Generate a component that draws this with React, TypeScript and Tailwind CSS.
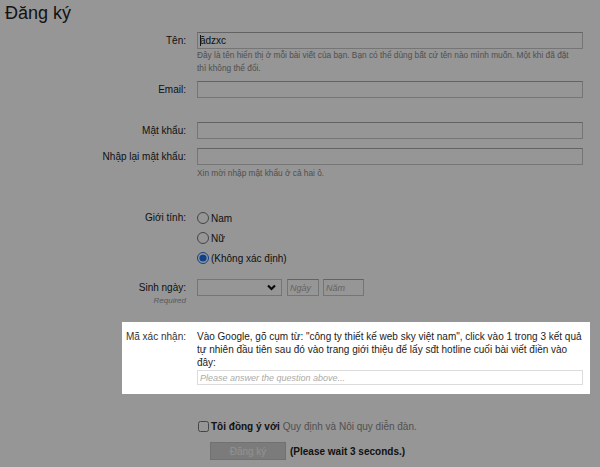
import React from 'react';
import clsx from 'clsx';

const font = "font-['Liberation_Sans',Arial,sans-serif]";

function Row({
  label,
  sub,
  className,
  labelLeading = 'leading-[17px]',
  children,
}: {
  label: string;
  sub?: string;
  className?: string;
  labelLeading?: string;
  children: React.ReactNode;
}) {
  return (
    <div className={clsx('grid grid-cols-[186px_386px] gap-x-[11px]', className)}>
      <div className="text-right">
        <div className={clsx('text-[10px] text-[#222]', labelLeading)}>{label}</div>
        {sub && <div className="text-[8px] italic leading-[9px] text-[#999]">{sub}</div>}
      </div>
      <div>{children}</div>
    </div>
  );
}

function TextBox({ value, placeholder, className }: { value?: string; placeholder?: string; className?: string }) {
  return (
    <input
      type="text"
      defaultValue={value}
      placeholder={placeholder}
      className={clsx(
        'block h-[17px] border border-[#c8c8c8] border-t-[#a8a8a8] bg-white px-[2px] text-[10px] text-[#222] outline-none placeholder:italic placeholder:text-[9px] placeholder:text-[#aaa]',
        className
      )}
    />
  );
}

function Radio({ label, checked }: { label: string; checked?: boolean }) {
  return (
    <label className="flex h-[20px] items-center gap-[2px] text-[10px] text-[#222]">
      <input type="radio" name="gender" defaultChecked={checked} className="m-0 h-[12px] w-[12px] accent-[#1a6ee8]" />
      {label}
    </label>
  );
}

export default function App() {
  return (
    <div className={clsx('relative h-[467px] w-[600px] overflow-hidden bg-white', font)}>
      <h1 className="pl-[5px] text-[18px] leading-[26px] text-[#222]">Đăng ký</h1>

      <Row label="Tên:" className="mt-[6px]">
        <div className="relative">
          <TextBox value="ădzxc" className="w-full" />
          <span className="absolute left-[3px] top-[3px] h-[11px] w-px bg-[#222]" />
        </div>
        <p className="text-[8.3px] leading-[13px] text-[#888]">
          Đây là tên hiển thị ở mỗi bài viết của bạn. Bạn có thể dùng bất cứ tên nào mình muốn. Một khi đã đặt
          <br />
          thì không thể đổi.
        </p>
      </Row>

      <Row label="Email:" className="mt-[6px]">
        <TextBox className="w-full" />
      </Row>

      <Row label="Mật khẩu:" className="mt-[24px]">
        <TextBox className="w-full" />
      </Row>

      <Row label="Nhập lại mật khẩu:" className="mt-[9px]">
        <TextBox className="w-full" />
        <p className="mt-[2px] text-[8.3px] leading-[13px] text-[#888]">Xin mời nhập mật khẩu ở cả hai ô.</p>
      </Row>

      <Row label="Giới tính:" className="mt-[28px]" labelLeading="leading-[20px]">
        <Radio label="Nam" />
        <Radio label="Nữ" />
        <Radio label="(Không xác định)" checked />
      </Row>

      <Row label="Sinh ngày:" sub="Required" className="mt-[11px]">
        <div className="flex gap-[5px]">
          <div className="relative h-[17px] w-[85px] border border-[#c8c8c8] bg-white">
            <svg
              className="absolute right-[5px] top-[4px]"
              width="9"
              height="7"
              viewBox="0 0 9 7"
              fill="none"
              stroke="#111"
              strokeWidth="2.2"
            >
              <path d="M1 1.5 4.5 5 8 1.5" />
            </svg>
          </div>
          <TextBox placeholder="Ngày" className="w-[32px]" />
          <TextBox placeholder="Năm" className="-ml-px w-[41px]" />
        </div>
      </Row>

      <div className="relative z-20 mt-[17px] ml-[122px] w-[468px] bg-white pt-[8px] pb-[9px]">
        <div className="grid grid-cols-[64px_386px] gap-x-[11px]">
          <div className="text-right text-[10px] leading-[13px] text-[#333]">Mã xác nhận:</div>
          <div>
            <p className="text-[10px] leading-[13px] text-[#222]">
              Vào Google, gõ cụm từ: "công ty thiết kế web sky việt nam", click vào 1 trong 3 kết quả tự nhiên đầu
              tiên sau đó vào trang giới thiệu để lấy sđt hotline cuối bài viết điền vào đây:
            </p>
            <input
              type="text"
              placeholder="Please answer the question above..."
              className="mt-[1px] block h-[15px] w-full border border-[#dcdcdc] bg-white px-[2px] text-[9px] outline-none placeholder:italic placeholder:text-[#aaa]"
            />
          </div>
        </div>
      </div>

      <div className="mt-[24px] ml-[198px] flex h-[16px] items-center text-[10px]">
        <input type="checkbox" className="m-0 h-[11px] w-[11px]" />
        <span className="ml-[2px] font-bold text-[#222]">Tôi đồng ý với</span>
        <span className="ml-[3px] text-[#8a8a8a]">Quy định và Nôi quy diễn đàn.</span>
      </div>

      <div className="mt-[8px] ml-[210px] flex items-center gap-[4px]">
        <button
          disabled
          className="h-[18px] w-[76px] border border-[#c0c0c0] bg-[#d2d2d2] text-[10px] text-[#f6f6f6]"
        >
          Đăng ký
        </button>
        <span className="text-[10px] font-bold text-[#222]">(Please wait 3 seconds.)</span>
      </div>

      <div className="absolute inset-0 z-10 bg-black/[0.41]" />
    </div>
  );
}
